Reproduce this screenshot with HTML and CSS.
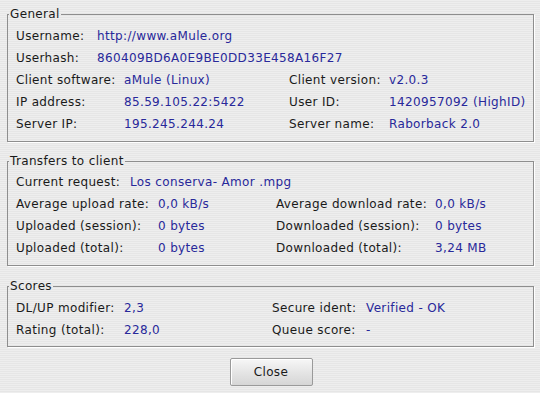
FILE: index.html
```html
<!DOCTYPE html>
<html lang="en">
<head>
    <meta charset="UTF-8">
    <title>Client Details</title>
    <link rel="stylesheet" href="styles.css">
</head>
<body>

    <!-- General -->
    <fieldset class="frame frame-general">
        <legend>General</legend>
        <div class="grid grid-ident">
            <span class="label">Username:</span>
            <span class="value">http://www.aMule.org</span>
            <span class="label">Userhash:</span>
            <span class="value">860409BD6A0E9BE0DD33E458A16F27</span>
        </div>
        <div class="grid grid-client">
            <span class="label">Client software:</span>
            <span class="value">aMule (Linux)</span>
            <span class="label">Client version:</span>
            <span class="value">v2.0.3</span>

            <span class="label">IP address:</span>
            <span class="value">85.59.105.22:5422</span>
            <span class="label">User ID:</span>
            <span class="value">1420957092 (HighID)</span>

            <span class="label">Server IP:</span>
            <span class="value">195.245.244.24</span>
            <span class="label">Server name:</span>
            <span class="value">Raborback 2.0</span>
        </div>
    </fieldset>

    <!-- Transfers to client -->
    <fieldset class="frame frame-transfers">
        <legend>Transfers to client</legend>
        <div class="grid grid-request">
            <span class="label">Current request:</span>
            <span class="value">Los conserva- Amor .mpg</span>
        </div>
        <div class="grid grid-transfers">
            <span class="label">Average upload rate:</span>
            <span class="value">0,0 kB/s</span>
            <span class="label">Average download rate:</span>
            <span class="value">0,0 kB/s</span>

            <span class="label">Uploaded (session):</span>
            <span class="value">0 bytes</span>
            <span class="label">Downloaded (session):</span>
            <span class="value">0 bytes</span>

            <span class="label">Uploaded (total):</span>
            <span class="value">0 bytes</span>
            <span class="label">Downloaded (total):</span>
            <span class="value">3,24 MB</span>
        </div>
    </fieldset>

    <!-- Scores -->
    <fieldset class="frame frame-scores">
        <legend>Scores</legend>
        <div class="grid grid-scores">
            <span class="label">DL/UP modifier:</span>
            <span class="value">2,3</span>
            <span class="label">Secure ident:</span>
            <span class="value">Verified - OK</span>

            <span class="label">Rating (total):</span>
            <span class="value">228,0</span>
            <span class="label">Queue score:</span>
            <span class="value">-</span>
        </div>
    </fieldset>

    <div class="buttons">
        <button type="button">Close</button>
    </div>

</body>
</html>
```

FILE: styles.css
```css
/* Janela geral com fundo listrado */
html, body {
    height: 100%;
}

body {
    margin: 0;
    padding: 7px 6px 0 7px;
    box-sizing: border-box;
    overflow: hidden;
    font-family: "DejaVu Sans", Verdana, sans-serif;
    font-size: 12px;
    letter-spacing: 0.35px;
    color: #1a1a1a;
    background: repeating-linear-gradient(to bottom, #eeeeee 0, #eeeeee 1px, #e6e6e6 1px, #e6e6e6 2px);
}

/* Molduras */
.frame {
    margin: 0 0 12px 0;
    padding: 4px 8px 6px 8px;
    min-width: 0;
    border: 1px solid #8e8e8e;
    box-shadow: 1px 1px 0 #ffffff;
}

.frame legend {
    margin-left: -7px;
    padding: 0 1px;
    line-height: 14px;
    font-size: 12px;
    color: #1a1a1a;
}

.frame-general {
    padding-bottom: 6px;
}

.frame-transfers {
    padding-top: 3px;
    padding-bottom: 6px;
    margin-bottom: 13px;
}

.frame-scores {
    padding-top: 4px;
    padding-bottom: 5px;
    margin-bottom: 11px;
}

/* Grades de rotulos e valores */
.grid {
    display: grid;
    grid-auto-rows: 22px;
    align-items: center;
    white-space: nowrap;
}

.grid-ident     { grid-template-columns: 81px 1fr; }
.grid-client    { grid-template-columns: 108px 165px 100px 1fr; }
.grid-request   { grid-template-columns: 114px 1fr; }
.grid-transfers { grid-template-columns: 142px 118px 159px 1fr; }
.grid-scores    { grid-template-columns: 108px 148px 94px 1fr; }

.label {
    color: #1a1a1a;
}

.value {
    color: #28289a;
}

/* Botao */
.buttons {
    display: flex;
    justify-content: center;
}

button {
    width: 83px;
    height: 28px;
    margin-left: 1px;
    font-family: "DejaVu Sans", Verdana, sans-serif;
    font-size: 12px;
    letter-spacing: 0.35px;
    color: #1a1a1a;
    background: linear-gradient(to bottom, #f7f7f7, #e2e2e2 60%, #d6d6d6);
    border: 1px solid #9a9a9a;
    border-radius: 2px;
    box-shadow: inset 1px 1px 0 #ffffff;
    cursor: pointer;
}
```
